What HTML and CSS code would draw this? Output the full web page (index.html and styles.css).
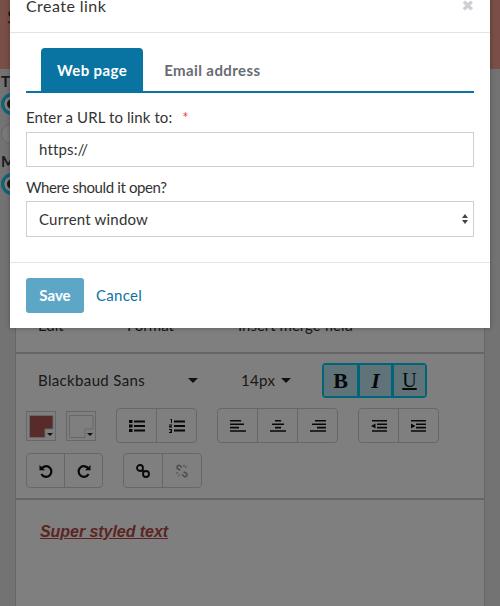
FILE: index.html
```html
<!DOCTYPE html>
<html lang="en">
<head>
  <meta charset="UTF-8">
  <meta name="viewport" content="width=device-width, initial-scale=1.0">
  <title>Create link</title>
  <link rel="stylesheet" href="styles.css">
</head>
<body>
  <!-- Page behind the modal -->
  <div class="page">
    <div class="banner"><span class="banner-title">S</span></div>
    <div class="options">
      <div class="option-label">T</div>
      <span class="radio radio-on"></span>
      <span class="radio radio-off"></span>
      <div class="option-label option-label-second">M</div>
      <span class="radio radio-on"></span>
    </div>
    <div class="editor">
      <div class="menubar">
        <span class="menu-edit">Edit</span>
        <span class="menu-format">Format</span>
        <span>Insert merge field</span>
      </div>
      <div class="toolbar">
        <div class="tool-row tool-row-fonts">
          <span class="font-name">Blackbaud Sans</span>
          <span class="caret"></span>
          <span class="font-size">14px</span>
          <span class="caret"></span>
          <div class="btn-group btn-group-active">
            <button class="tool tool-style tool-b">B</button>
            <button class="tool tool-style tool-i">I</button>
            <button class="tool tool-style tool-u">U</button>
          </div>
        </div>
        <div class="tool-row">
          <svg class="swatch swatch-text" viewBox="0 0 30 30">
            <rect class="swatch-box" x=".5" y=".5" width="29" height="29"/>
            <path class="swatch-fill" d="M3.500 4.500h23.500v13.500h-8v8.500h-15.500z"/>
            <path class="swatch-arrow" d="M21 22h6l-3 3z"/>
          </svg>
          <svg class="swatch swatch-back" viewBox="0 0 30 30">
            <rect class="swatch-box" x=".5" y=".5" width="29" height="29"/>
            <path class="swatch-fill" d="M3.500 4.500h23.500v13.500h-8v8.500h-15.500z"/>
            <path class="swatch-arrow" d="M21 22h6l-3 3z"/>
          </svg>
          <div class="btn-group group-list">
            <button class="tool"><svg viewBox="0 0 16 12"><path d="M0 0h3.500v3H0zM0 4.500h3.500v3H0zM0 9h3.500v3H0zM5 .5h11v2H5zM5 5h11v2H5zM5 9.500h11v2H5z"/></svg></button>
            <button class="tool"><svg viewBox="0 0 16 14"><path d="M5 1.500h11v2H5zM5 6h11v2H5zM5 10.500h11v2H5zM1.500 0h1.500v4H2V1H1.500zM0 5.500h3v1.200H1.500v.6H3v1.200H0V7h1.500v-.4H0zM0 10h3v4H0v-1h2v-.5H1v-1h1V11H0z"/></svg></button>
          </div>
          <div class="btn-group group-align">
            <button class="tool"><svg viewBox="0 0 16 12"><path d="M0 0h11v1.600H0zM0 3.400h14v1.600H0zM0 6.800h9v1.600H0zM0 10.200h16v1.600H0z"/></svg></button>
            <button class="tool"><svg viewBox="0 0 16 12"><path d="M5 0h6v1.600H5zM2 3.400h12v1.600H2zM5 6.800h6v1.600H5zM0 10.200h16v1.600H0z"/></svg></button>
            <button class="tool"><svg viewBox="0 0 16 12"><path d="M5 0h11v1.600H5zM2 3.400h14v1.600H2zM7 6.800h9v1.600H7zM0 10.200h16v1.600H0z"/></svg></button>
          </div>
          <div class="btn-group group-indent">
            <button class="tool"><svg viewBox="0 0 16 12"><path d="M1 0h15v1.600H1zM6 3.400h10v1.600H6zM6 6.800h10v1.600H6zM1 10.200h15v1.600H1zM4.500 3.500v5L0 6z"/></svg></button>
            <button class="tool"><svg viewBox="0 0 16 12"><path d="M0 0h15v1.600H0zM5 3.400h10v1.600H5zM5 6.800h10v1.600H5zM0 10.200h15v1.600H0zM0 3.500v5L4.500 6z"/></svg></button>
          </div>
        </div>
        <div class="tool-row">
          <div class="btn-group group-history">
            <button class="tool"><svg viewBox="0 0 14 14"><path d="M2.400 5A5.300 5.300 0 1 1 2.400 10" fill="none" stroke="currentColor" stroke-width="2.200"/><path d="M.5 1l5.500 5.300H.5z"/></svg></button>
            <button class="tool"><svg viewBox="0 0 14 14"><path d="M11.600 5A5.300 5.300 0 1 0 11.600 10" fill="none" stroke="currentColor" stroke-width="2.200"/><path d="M13.500 1l-5.500 5.300h5.500z"/></svg></button>
          </div>
          <div class="btn-group group-link">
            <button class="tool"><svg viewBox="0 0 14 14"><g fill="none" stroke="currentColor" stroke-width="1.800"><circle cx="4" cy="4" r="3"/><circle cx="10" cy="10" r="3"/><path d="M6 6l2 2"/></g></svg></button>
            <button class="tool tool-off"><svg viewBox="0 0 14 14"><g fill="none" stroke="currentColor" stroke-width="1.500"><path d="M5.500 6L3 5C1 3.800 2 .8 4.500 1.500L7 3.500"/><path d="M8.500 8l2.500 1c2 1.200 1 4.200-1.500 3.500L7 10.500"/><path d="M9 .5v2.500M12 2l-2 2M1 9h2.500M3 12.500l2-2" stroke-width="1"/></g></svg></button>
          </div>
        </div>
      </div>
      <div class="content"><span class="styled-text">Super styled text</span></div>
    </div>
  </div>

  <div class="backdrop"></div>

  <!-- Create link modal -->
  <div class="modal">
    <div class="modal-header">
      <h2>Create link</h2>
      <span class="close">&#10006;</span>
    </div>
    <div class="modal-body">
      <div class="tabs">
        <a class="tab tab-active">Web page</a>
        <a class="tab tab-email">Email address</a>
      </div>
      <label class="field-label" for="url">Enter a URL to link to: <span class="required">*</span></label>
      <input class="field" id="url" type="text" value="https://">
      <label class="field-label field-label-second">Where should it open?</label>
      <div class="select">
        <span>Current window</span>
        <span class="select-arrows"></span>
      </div>
    </div>
    <div class="modal-footer">
      <button class="btn-save">Save</button>
      <a class="btn-cancel">Cancel</a>
    </div>
  </div>
</body>
</html>
```

FILE: styles.css
```css
html, body {
  margin: 0;
  padding: 0;
  height: 606px;
  overflow: hidden;
}
body {
  font-family: Lato, Arial, sans-serif;
  font-size: 15px;
  color: #333;
  background: #e6e6e6;
  position: relative;
}
button {
  font-family: inherit;
}

/* page behind */
.page {
  height: 606px;
  overflow: hidden;
}
.banner {
  height: 69px;
  background: #f39e8e;
}
.banner-title {
  display: block;
  padding: 4px 0 0 7px;
  font-size: 20px;
  line-height: 24px;
}
.options {
  height: 226px;
  padding-top: 3px;
  box-sizing: border-box;
  font-size: 15px;
  font-weight: bold;
}
.option-label {
  padding-left: 1px;
  line-height: 18px;
}
.option-label-second {
  margin-top: 8px;
}
.radio {
  display: block;
  margin-left: 1px;
  border-radius: 50%;
  box-sizing: border-box;
}
.radio-on {
  width: 22px;
  height: 22px;
  margin-top: 3px;
  border: 3px solid #1ec8f0;
  box-shadow: inset 0 0 0 3px #fff;
  background: #333;
}
.radio-off {
  width: 20px;
  height: 20px;
  margin-top: 9px;
  border: 1px solid #ccc;
  background: #f2f2f2;
}
.editor {
  margin: 0 15px;
  height: 400px;
  border-left: 1px solid #ccc;
  border-right: 1px solid #ccc;
  background: #fff;
}
.menubar {
  display: flex;
  height: 59px;
  padding: 0 0 15px 22px;
  align-items: flex-end;
  line-height: 24px;
  border-bottom: 2px solid #ccc;
  box-sizing: border-box;
}
.menu-edit { width: 89px; }
.menu-format { width: 111px; }
.toolbar {
  display: flex;
  flex-direction: column;
  gap: 10px;
  height: 146px;
  padding: 9px 0 0 10px;
  border-bottom: 2px solid #ccc;
  box-sizing: border-box;
}
.tool-row {
  display: flex;
  align-items: center;
}
.tool-row-fonts {
  padding-left: 12px;
  letter-spacing: .35px;
}
.font-name { width: 150px; margin-bottom: 2px; }
.font-size { margin: 0 0 2px 43px; width: 40px; }
.caret {
  width: 0;
  height: 0;
  border: 5px solid transparent;
  border-top-color: #222;
  border-bottom: 0;
}
.btn-group {
  display: flex;
  border: 1px solid #cdcfd2;
  border-radius: 4px;
  margin-left: 20px;
}
.tool {
  display: flex;
  align-items: center;
  justify-content: center;
  box-sizing: border-box;
  width: 40px;
  height: 33px;
  padding: 0;
  border: 0;
  border-left: 1px solid #cdcfd2;
  background: transparent;
  color: #111;
}
.tool:first-child {
  width: 39px;
  border-left: 0;
}
.tool svg {
  width: 16px;
  height: 14px;
  fill: currentColor;
}
.tool-off { color: #999; }
.group-history { margin-left: 0; }
.group-history .tool { width: 38px; }
.group-history .tool:first-child { width: 37px; }
.group-link .tool { width: 39px; }
.group-link .tool:first-child { width: 38px; }
.btn-group-active {
  margin-left: 31px;
  border: 2px solid #00c8f5;
}
.btn-group-active .tool {
  width: 34px;
  height: 31px;
  background: #c0e6f2;
  border-left: 3px solid #00c8f5;
  font-family: "Liberation Serif", serif;
  font-size: 22px;
}
.btn-group-active .tool:first-child {
  width: 33px;
  border-left: 0;
}
.tool-b { font-weight: bold; }
.tool-i { font-style: italic; font-weight: bold; }
.btn-group-active .tool-u { text-decoration: underline; font-size: 20px; }
.swatch {
  display: block;
  width: 30px;
  height: 30px;
}
.swatch-back { margin-left: 10px; }
.swatch-box {
  fill: #fff;
  stroke: #cdcfd2;
}
.swatch-fill {
  fill: #fff;
  stroke: #cdcfd2;
}
.swatch-text .swatch-fill { fill: #b05555; }
.swatch-arrow { fill: #222; }
.content {
  padding: 23px 24px;
  font-family: "Liberation Sans", Arial, sans-serif;
}
.styled-text {
  font-size: 16px;
  font-weight: bold;
  font-style: italic;
  letter-spacing: -.05px;
  text-decoration: underline;
  color: #b94a48;
}

.backdrop {
  position: absolute;
  inset: 0;
  background: rgba(0, 0, 0, 0.5);
}

/* modal */
.modal {
  position: absolute;
  left: 10px;
  top: -15px;
  width: 480px;
  height: 343px;
  background: #fff;
  box-shadow: 0 0 5px rgba(0, 0, 0, 0.3);
}
.modal-header {
  display: flex;
  justify-content: space-between;
  align-items: center;
  height: 48px;
  padding: 0 16px 5px;
  box-sizing: border-box;
  border-bottom: 1px solid #e2e3e4;
}
.modal-header h2 {
  margin: 0;
  font-size: 16px;
  line-height: 12px;
  font-weight: normal;
  letter-spacing: .45px;
  color: #333;
}
.close {
  color: #cdcfd2;
  font-size: 15px;
  line-height: 12px;
  font-family: "DejaVu Sans", sans-serif;
}
.modal-body {
  height: 230px;
  padding: 15px 16px 0;
  box-sizing: border-box;
  border-bottom: 1px solid #e2e3e4;
}
.tabs {
  display: flex;
  height: 45px;
  padding-left: 15px;
  border-bottom: 2px solid #0974a1;
  box-sizing: border-box;
  margin-bottom: 15px;
}
.tab {
  display: flex;
  align-items: center;
  height: 43px;
  padding: 0 16px;
  font-size: 15px;
  font-weight: bold;
  letter-spacing: .4px;
  color: #686c73;
}
.tab-email {
  margin-left: 5px;
}
.tab-active {
  background: #0974a1;
  color: #fff;
  border-radius: 4px 4px 0 0;
}
.field-label {
  display: block;
  height: 24px;
  line-height: 18px;
  letter-spacing: .1px;
  color: #333;
}
.field-label-second {
  height: 23px;
  margin-top: 11px;
  letter-spacing: -.38px;
}
.required {
  color: #ef4044;
  margin-left: 6px;
}
.field {
  display: block;
  width: 100%;
  height: 35px;
  box-sizing: border-box;
  padding: 0 12px 1px;
  border: 1px solid #cdcfd2;
  font: inherit;
  letter-spacing: .15px;
  color: #333;
}
.select {
  display: flex;
  justify-content: space-between;
  align-items: center;
  height: 36px;
  padding: 0 4px 0 12px;
  box-sizing: border-box;
  border: 1px solid #cdcfd2;
  letter-spacing: .2px;
  color: #333;
}
.select-arrows {
  position: relative;
  width: 7px;
  height: 10px;
}
.select-arrows::before,
.select-arrows::after {
  content: "";
  position: absolute;
  left: 0;
  border-left: 3.5px solid transparent;
  border-right: 3.5px solid transparent;
}
.select-arrows::before {
  top: 0;
  border-bottom: 4px solid #444;
}
.select-arrows::after {
  bottom: 0;
  border-top: 4px solid #444;
}
.modal-footer {
  display: flex;
  align-items: center;
  height: 65px;
  padding: 0 16px;
}
.btn-save {
  width: 58px;
  height: 35px;
  padding: 0 0 2px;
  border: 0;
  border-radius: 3px;
  background: #5ea6c6;
  color: #fff;
  font-size: 15px;
  font-weight: bold;
}
.btn-cancel {
  margin: 0 0 2px 12px;
  letter-spacing: .3px;
  color: #0974a1;
}
```
